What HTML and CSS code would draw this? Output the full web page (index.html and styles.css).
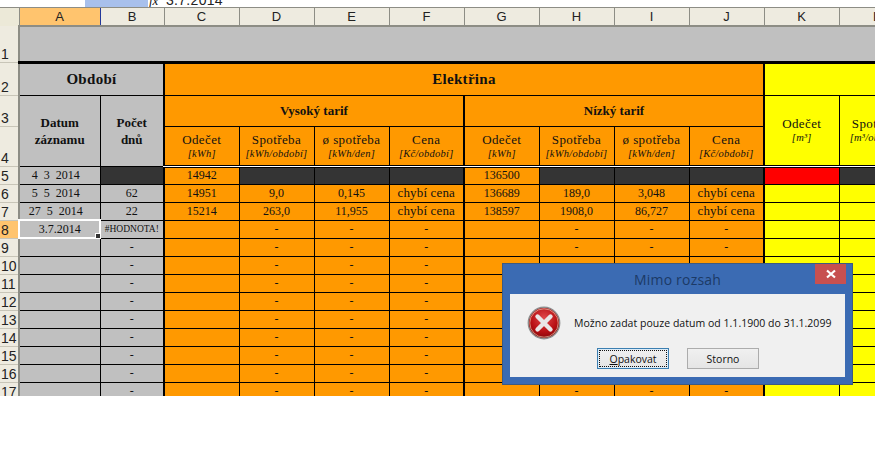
FILE: index.html
```html
<!DOCTYPE html>
<html lang="cs">
<head>
<meta charset="utf-8">
<title>Mimo rozsah</title>
<link rel="stylesheet" href="styles.css">
</head>
<body>
<div class="formula"><span class="namebox"></span><span class="fx">fx</span><span class="value">3.7.2014</span></div>
<div class="sheet">
<table>
<colgroup><col class="w-rh"><col class="w-a"><col class="w-b"><col class="w-c"><col class="w-c"><col class="w-c"><col class="w-c"><col class="w-c"><col class="w-c"><col class="w-c"><col class="w-c"><col class="w-c"><col class="w-c"></colgroup>
<tr class="r-col"><th class="corner"></th><th class="ch sel">A</th><th class="ch">B</th><th class="ch">C</th><th class="ch">D</th><th class="ch">E</th><th class="ch">F</th><th class="ch">G</th><th class="ch">H</th><th class="ch">I</th><th class="ch">J</th><th class="ch">K</th><th class="ch">L</th></tr>
<tr class="r1"><th class="rh">1</th><td class="grey top" colspan="12"></td></tr>
<tr class="r2"><th class="rh">2</th><td class="grey title tr" colspan="2">Období</td><td class="orange title tr" colspan="8">Elektřina</td><td class="yellow" colspan="2"></td></tr>
<tr class="r3"><th class="rh">3</th><td class="grey bold top-b" rowspan="2">Datum<br>záznamu</td><td class="grey bold top-b tr" rowspan="2">Počet<br>dnů</td><td class="orange bold tr" colspan="4">Vysoký tarif</td><td class="orange bold tr" colspan="4">Nízký tarif</td><td class="yellow head db" rowspan="2">Odečet<i>[m³]</i></td><td class="yellow head db" rowspan="2">Spotřeba<i>[m³/období]</i></td></tr>
<tr class="r4"><th class="rh">4</th><td class="orange head db">Odečet<i>[kWh]</i></td><td class="orange head db">Spotřeba<i>[kWh/období]</i></td><td class="orange head db">ø spotřeba<i>[kWh/den]</i></td><td class="orange head db tr">Cena<i>[Kč/období]</i></td><td class="orange head db">Odečet<i>[kWh]</i></td><td class="orange head db">Spotřeba<i>[kWh/období]</i></td><td class="orange head db">ø spotřeba<i>[kWh/den]</i></td><td class="orange head db tr">Cena<i>[Kč/období]</i></td></tr>
<tr class="r"><th class="rh">5</th><td class="grey date">4&nbsp;&nbsp;3&nbsp;&nbsp;2014</td><td class="dots tr"></td><td class="orange">14942</td><td class="dots"></td><td class="dots"></td><td class="dots tr"></td><td class="orange">136500</td><td class="dots"></td><td class="dots"></td><td class="dots tr"></td><td class="red"></td><td class="dots"></td></tr>
<tr class="r"><th class="rh">6</th><td class="grey date">5&nbsp;&nbsp;5&nbsp;&nbsp;2014</td><td class="grey tr">62</td><td class="orange">14951</td><td class="orange">9,0</td><td class="orange">0,145</td><td class="orange tr word">chybí cena</td><td class="orange">136689</td><td class="orange">189,0</td><td class="orange">3,048</td><td class="orange tr word">chybí cena</td><td class="yellow"></td><td class="yellow"></td></tr>
<tr class="r"><th class="rh">7</th><td class="grey date">27&nbsp;&nbsp;5&nbsp;&nbsp;2014</td><td class="grey tr">22</td><td class="orange">15214</td><td class="orange">263,0</td><td class="orange">11,955</td><td class="orange tr word">chybí cena</td><td class="orange">138597</td><td class="orange">1908,0</td><td class="orange">86,727</td><td class="orange tr word">chybí cena</td><td class="yellow"></td><td class="yellow"></td></tr>
<tr class="r"><th class="rh sel">8</th><td class="grey active">3.7.2014<span class="handle"></span></td><td class="grey err tr">#HODNOTA!</td><td class="orange"></td><td class="orange">-</td><td class="orange">-</td><td class="orange tr">-</td><td class="orange"></td><td class="orange">-</td><td class="orange">-</td><td class="orange tr">-</td><td class="yellow"></td><td class="yellow"></td></tr>
<tr class="r"><th class="rh">9</th><td class="grey"></td><td class="grey tr">-</td><td class="orange"></td><td class="orange">-</td><td class="orange">-</td><td class="orange tr">-</td><td class="orange"></td><td class="orange">-</td><td class="orange">-</td><td class="orange tr">-</td><td class="yellow"></td><td class="yellow"></td></tr>
<tr class="r"><th class="rh">10</th><td class="grey"></td><td class="grey tr">-</td><td class="orange"></td><td class="orange">-</td><td class="orange">-</td><td class="orange tr">-</td><td class="orange"></td><td class="orange">-</td><td class="orange">-</td><td class="orange tr">-</td><td class="yellow"></td><td class="yellow"></td></tr>
<tr class="r"><th class="rh">11</th><td class="grey"></td><td class="grey tr">-</td><td class="orange"></td><td class="orange">-</td><td class="orange">-</td><td class="orange tr">-</td><td class="orange"></td><td class="orange">-</td><td class="orange">-</td><td class="orange tr">-</td><td class="yellow"></td><td class="yellow"></td></tr>
<tr class="r"><th class="rh">12</th><td class="grey"></td><td class="grey tr">-</td><td class="orange"></td><td class="orange">-</td><td class="orange">-</td><td class="orange tr">-</td><td class="orange"></td><td class="orange">-</td><td class="orange">-</td><td class="orange tr">-</td><td class="yellow"></td><td class="yellow"></td></tr>
<tr class="r"><th class="rh">13</th><td class="grey"></td><td class="grey tr">-</td><td class="orange"></td><td class="orange">-</td><td class="orange">-</td><td class="orange tr">-</td><td class="orange"></td><td class="orange">-</td><td class="orange">-</td><td class="orange tr">-</td><td class="yellow"></td><td class="yellow"></td></tr>
<tr class="r"><th class="rh">14</th><td class="grey"></td><td class="grey tr">-</td><td class="orange"></td><td class="orange">-</td><td class="orange">-</td><td class="orange tr">-</td><td class="orange"></td><td class="orange">-</td><td class="orange">-</td><td class="orange tr">-</td><td class="yellow"></td><td class="yellow"></td></tr>
<tr class="r"><th class="rh">15</th><td class="grey"></td><td class="grey tr">-</td><td class="orange"></td><td class="orange">-</td><td class="orange">-</td><td class="orange tr">-</td><td class="orange"></td><td class="orange">-</td><td class="orange">-</td><td class="orange tr">-</td><td class="yellow"></td><td class="yellow"></td></tr>
<tr class="r"><th class="rh">16</th><td class="grey"></td><td class="grey tr">-</td><td class="orange"></td><td class="orange">-</td><td class="orange">-</td><td class="orange tr">-</td><td class="orange"></td><td class="orange">-</td><td class="orange">-</td><td class="orange tr">-</td><td class="yellow"></td><td class="yellow"></td></tr>
<tr class="r"><th class="rh">17</th><td class="grey"></td><td class="grey tr">-</td><td class="orange"></td><td class="orange">-</td><td class="orange">-</td><td class="orange tr">-</td><td class="orange"></td><td class="orange">-</td><td class="orange">-</td><td class="orange tr">-</td><td class="yellow"></td><td class="yellow"></td></tr>
</table>
</div>
<div class="dialog">
  <div class="titlebar"><span class="dtitle">Mimo rozsah</span><span class="close"><svg width="10" height="10" viewBox="0 0 10 10"><path d="M1 1.5 L9 8.5 M9 1.5 L1 8.5" stroke="#fff" stroke-width="2.2"/></svg></span></div>
  <div class="dbody">
    <div class="msg">
      <svg class="erricon" width="34" height="34" viewBox="0 0 34 34"><defs><radialGradient id="rg" cx="50%" cy="35%" r="70%"><stop offset="0" stop-color="#e0474a"/><stop offset="0.6" stop-color="#b81014"/><stop offset="1" stop-color="#7c0508"/></radialGradient></defs><circle cx="17" cy="17" r="15.7" fill="url(#rg)" stroke="#8d8d8d" stroke-width="1.4"/><circle cx="17" cy="17" r="14.2" fill="none" stroke="#eec" stroke-opacity="0.55" stroke-width="1"/><path d="M10.5 10.5 L23.5 23.5 M23.5 10.5 L10.5 23.5" stroke="#e9e6e6" stroke-width="4.4" stroke-linecap="round"/></svg>
      <span class="msgtext">Možno zadat pouze datum od 1.1.1900 do 31.1.2099</span>
    </div>
    <div class="buttons"><button class="btn primary"><span class="focus"><u>O</u>pakovat</span></button><button class="btn">Storno</button></div>
  </div>
</div>
</body>
</html>
```
FILE: styles.css
```css
html, body { margin: 0; padding: 0; background: #fff; }
body { width: 875px; height: 460px; overflow: hidden; position: relative; font-family: "Liberation Serif", serif; color: #111; }

.formula { height: 7px; overflow: hidden; display: flex; font-family: "Liberation Sans", sans-serif; font-size: 14px; line-height: 7px; }
.namebox { width: 63px; margin-left: 85px; background: #a8c0ec; }
.fx { width: 18px; padding-left: 1px; font: italic 13px/1px "Liberation Serif", serif; box-sizing: border-box; }
.value { line-height: 0; letter-spacing: .3px; color: #222; }

.sheet { height: 389px; overflow: hidden; border-top: 1px solid #8d8d85; box-sizing: border-box; }
table { border-collapse: collapse; table-layout: fixed; width: 914px; }
.w-rh { width: 19px; } .w-a { width: 81px; } .w-b { width: 64px; } .w-c { width: 75px; }
td, th { padding: 0; text-align: center; vertical-align: middle; overflow: hidden; white-space: nowrap; font-weight: normal; }
td { border: 1px solid #000; font-size: 12px; letter-spacing: 0; }
.word { font-size: 13px; letter-spacing: .15px; }
.date { padding-right: 8px; }

.r-col { height: 18px; }
.r1 { height: 36px; } .r2 { height: 33px; } .r3 { height: 31px; } .r4 { height: 40px; }
.r { height: 18px; }

.corner { background: #ece9d8; border-right: 1px solid #8d8d85; }
.ch { background: #eeebe0; border-right: 1px solid #8d8d85; border-bottom: 2px solid #8d8d85; font: 13px "Liberation Sans", sans-serif; color: #222; }
.rh { background: #eeebe0; border-right: 2px solid #8d8d85; border-bottom: 1px solid #c8c5b8; font: 14px/14px "Liberation Sans", sans-serif; color: #222; vertical-align: bottom; text-align: left; padding: 0 0 1px 1px; }
.ch.sel, .rh.sel { background: #ffc46e; }
.ch.sel { border-right-color: #23389a; }

.grey { background: #c0c0c0; }
.orange { background: #ff9900; }
.yellow { background: #ffff00; }
.red { background: #ff0000; border-top: 2px solid #800000; }
.dots { background-color: #333; background-image: repeating-conic-gradient(#0c0c0c 0 25%, #5c5c5c 0 50%); background-size: 2px 2px; }

.top { border-bottom: 3px solid #000; border-top: 0; }
.tr { border-right: 2px solid #000; }
.title { font-size: 15px; font-weight: bold; letter-spacing: .3px; }
.bold { font-weight: bold; font-size: 13px; }
.top-b { line-height: 17px; }
.db { border-bottom: 3px double #000; }
.head { font-size: 13px; line-height: 15px; letter-spacing: .4px; }
.head i { display: block; font-size: 10.5px; line-height: 13px; letter-spacing: .25px; }
.err { font-size: 9.5px; }
.active { position: relative; outline: 2px solid #fff; outline-offset: -1px; }
.handle { position: absolute; right: -1px; bottom: -1px; width: 4px; height: 4px; background: #333; border: 1px solid #fff; }

.dialog { position: absolute; left: 502px; top: 263px; width: 351px; height: 122px; box-sizing: border-box; background: #3b6bb3; border: 1px solid #3d5a80; display: flex; flex-direction: column; font-family: "Open Sans", sans-serif; }
.titlebar { height: 30px; position: relative; display: flex; align-items: center; justify-content: center; }
.dtitle { font-size: 14px; color: #1c3a66; letter-spacing: .2px; margin-top: 1px; }
.close { position: absolute; right: 6px; top: 0; width: 31px; height: 20px; background: #c75050; display: flex; align-items: center; justify-content: center; }
.dbody { margin: 0 7px 7px 7px; flex: 1; background: #f0f0f0; display: flex; flex-direction: column; }
.msg { display: flex; align-items: center; padding: 12px 0 0 17px; height: 34px; }
.erricon { flex: none; }
.msgtext { margin-left: 13px; font-size: 10.5px; letter-spacing: .03px; color: #111; white-space: nowrap; }
.buttons { display: flex; gap: 18px; margin: 8px 0 0 87px; }
.btn { width: 72px; height: 21px; padding: 0; box-sizing: border-box; border: 1px solid #acacac; background: linear-gradient(#f0f0f0, #e5e5e5); font: 10.5px "Open Sans", sans-serif; color: #111; display: flex; align-items: center; justify-content: center; }
.primary { border: 1px solid #3c7fb1; box-shadow: inset 0 0 0 1px #dcecf8; }
.focus { display: flex; align-items: center; justify-content: center; width: 66px; height: 15px; outline: 1px dotted #111; }
.focus u { text-decoration: underline; }
```
